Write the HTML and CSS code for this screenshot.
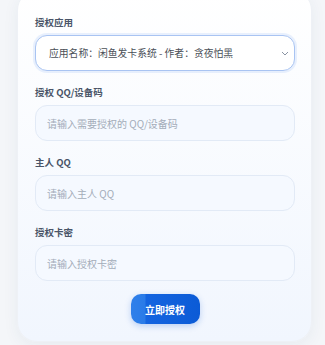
FILE: index.html
```html
<html>
<head>
  <meta charset="utf-8">
  <title>授权</title>
  <link rel="stylesheet" href="styles.css">
</head>
<body>
  <div class="card">
    <div class="group">
      <label class="label">授权应用</label>
      <div class="select-wrap">
        <select class="field select">
          <option>应用名称：闲鱼发卡系统 - 作者：贪夜怕黑</option>
        </select>
        <svg class="chev" width="8" height="5" viewBox="0 0 8 5"><path d="M1 1l3 3 3-3" fill="none" stroke="#8a94a3" stroke-width="1"/></svg>
      </div>
    </div>
    <div class="group">
      <label class="label">授权 QQ/设备码</label>
      <input class="field" type="text" placeholder="请输入需要授权的 QQ/设备码">
    </div>
    <div class="group">
      <label class="label">主人 QQ</label>
      <input class="field" type="text" placeholder="请输入主人 QQ">
    </div>
    <div class="group">
      <label class="label">授权卡密</label>
      <input class="field" type="text" placeholder="请输入授权卡密">
    </div>
    <div class="actions">
      <button class="btn">立即授权</button>
    </div>
  </div>
</body>
</html>
```

FILE: styles.css
```css
body { margin: 0; padding: 0 13px 0 17px; background: #f4f6f9;
  font-family: "Noto Sans CJK SC", "Noto Sans", sans-serif; }
.card { margin-top: -10px; padding: 24px 16px 17px 17px; border-radius: 20px;
  background: linear-gradient(to bottom, #ffffff, #f1f6fe);
  border: 1px solid #eef1f6; box-shadow: 0 4px 16px rgba(30, 60, 110, 0.06); }
.group { margin-bottom: 14px; }
.label { display: block; height: 14px; line-height: 14px; margin-bottom: 6px;
  font-size: 9.5px; font-weight: 700; color: #4a5568; }
.field { display: block; width: 100%; height: 36px; box-sizing: border-box;
  padding: 0 11px; border: 1px solid #e2eaf6; border-radius: 12px;
  background: #f5f9ff; font-family: inherit; font-size: 10px; color: #333; outline: none; }
.field::placeholder { color: #a3acb9; }
.select-wrap { position: relative; }
.select { -webkit-appearance: none; appearance: none; background: #fff;
  border-color: #a9c4f2; padding-left: 13px; font-size: 9.8px; color: #4a4f57;
  box-shadow: 0 0 0 2px rgba(80, 140, 240, 0.12); }
.chev { position: absolute; right: 6px; top: 16px; }
.actions { display: flex; justify-content: center; margin-top: -1px; }
.btn { width: 69px; height: 30px; border: none; border-radius: 10px; cursor: pointer;
  background: linear-gradient(to right, #2f80ea 0%, #2a7be8 20%, #1464e0 22%, #0b5bd6 100%);
  color: #fff; font-family: inherit; font-size: 10px; font-weight: 700;
  box-shadow: 0 2px 6px rgba(20, 90, 210, 0.25); }
```
